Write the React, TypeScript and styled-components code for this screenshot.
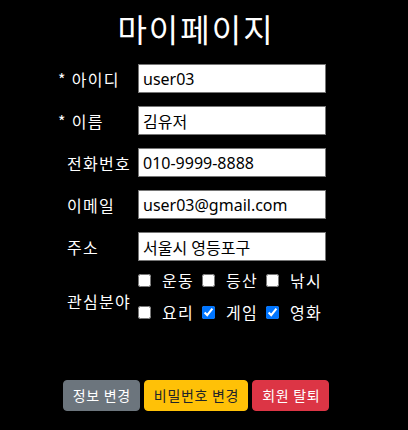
import styled, { createGlobalStyle } from "styled-components";

const GlobalStyle = createGlobalStyle`
  body {
    margin: 0;
    background: #000;
    color: #fff;
    font-family: "Noto Sans", "Noto Sans CJK KR", sans-serif;
  }
`;

const Page = styled.div`
  width: 390px;
  padding-top: 8px;
`;

const Title = styled.h1`
  margin: 0 0 16px;
  text-align: center;
  font-family: "Noto Sans CJK KR", sans-serif;
  font-size: 32px;
  font-weight: 400;
  line-height: 40px;
  letter-spacing: 2px;
  text-indent: 2px;
`;

const Form = styled.form`
  display: grid;
  grid-template-columns: 71px 188px;
  row-gap: 13px;
  margin-left: 67px;
`;

const Label = styled.label<{ $required?: boolean; $shift?: number }>`
  display: flex;
  align-items: center;
  margin-left: ${(p) => (p.$required ? "-9px" : "0")};
  padding-top: ${(p) => p.$shift || 0}px;
  font-family: "Noto Sans CJK KR", sans-serif;
  font-size: 16px;
  letter-spacing: 1.3px;
  white-space: pre;
  &::before {
    content: "${(p) => (p.$required ? "* " : "")}";
  }
`;

const Input = styled.input`
  box-sizing: border-box;
  width: 188px;
  height: 29px;
  margin: 0;
  padding: 1px 4px;
  border: 1px solid #767676;
  border-radius: 0;
  background: #fff;
  color: #000;
  font-family: "Noto Sans", "Noto Sans CJK KR", sans-serif;
  font-size: 16px;
  outline: none;
`;

const Interests = styled.div`
  display: grid;
  grid-template-columns: repeat(3, 64px);
  grid-auto-rows: 20px;
  row-gap: 12px;
  margin-top: -4px;
`;

const Check = styled.label`
  display: flex;
  align-items: center;
  gap: 11px;
  font-family: "Noto Sans CJK KR", sans-serif;
  font-size: 16px;
  letter-spacing: 1.3px;
  input {
    width: 13px;
    height: 13px;
    margin: 0;
  }
`;

const Buttons = styled.div`
  display: flex;
  justify-content: center;
  gap: 4px;
  margin-top: 58px;
  padding-left: 2px;
`;

const Button = styled.button<{ $bg: string; $fg?: string }>`
  height: 31px;
  padding: 0 8px 0 9px;
  border: 1px solid ${(p) => p.$bg};
  border-radius: 4px;
  background: ${(p) => p.$bg};
  color: ${(p) => p.$fg || "#fff"};
  font-family: "Noto Sans CJK KR", sans-serif;
  font-size: 14px;
  line-height: 21px;
  letter-spacing: 0.7px;
`;

const fields = [
  { label: "아이디", value: "user03", required: true },
  { label: "이름", value: "김유저", required: true },
  { label: "전화번호", value: "010-9999-8888" },
  { label: "이메일", value: "user03@gmail.com" },
  { label: "주소", value: "서울시 영등포구" },
];

const hobbies = [
  { name: "운동", checked: false },
  { name: "등산", checked: false },
  { name: "낚시", checked: false },
  { name: "요리", checked: false },
  { name: "게임", checked: true },
  { name: "영화", checked: true },
];

function App() {
  return (
    <Page>
      <GlobalStyle />
      <Title>마이페이지</Title>
      <Form onSubmit={(e) => e.preventDefault()}>
        {fields.map((f) => [
          <Label key={f.label + "l"} $required={f.required}>{f.label}</Label>,
          <Input key={f.label + "i"} defaultValue={f.value} />,
        ])}
        <Label $shift={6}>관심분야</Label>
        <Interests>
          {hobbies.map((h) => (
            <Check key={h.name}>
              <input type="checkbox" defaultChecked={h.checked} />
              {h.name}
            </Check>
          ))}
        </Interests>
      </Form>
      <Buttons>
        <Button $bg="#6c757d">정보 변경</Button>
        <Button $bg="#ffc107" $fg="#212529">비밀번호 변경</Button>
        <Button $bg="#dc3545">회원 탈퇴</Button>
      </Buttons>
    </Page>
  );
}

export default App;
